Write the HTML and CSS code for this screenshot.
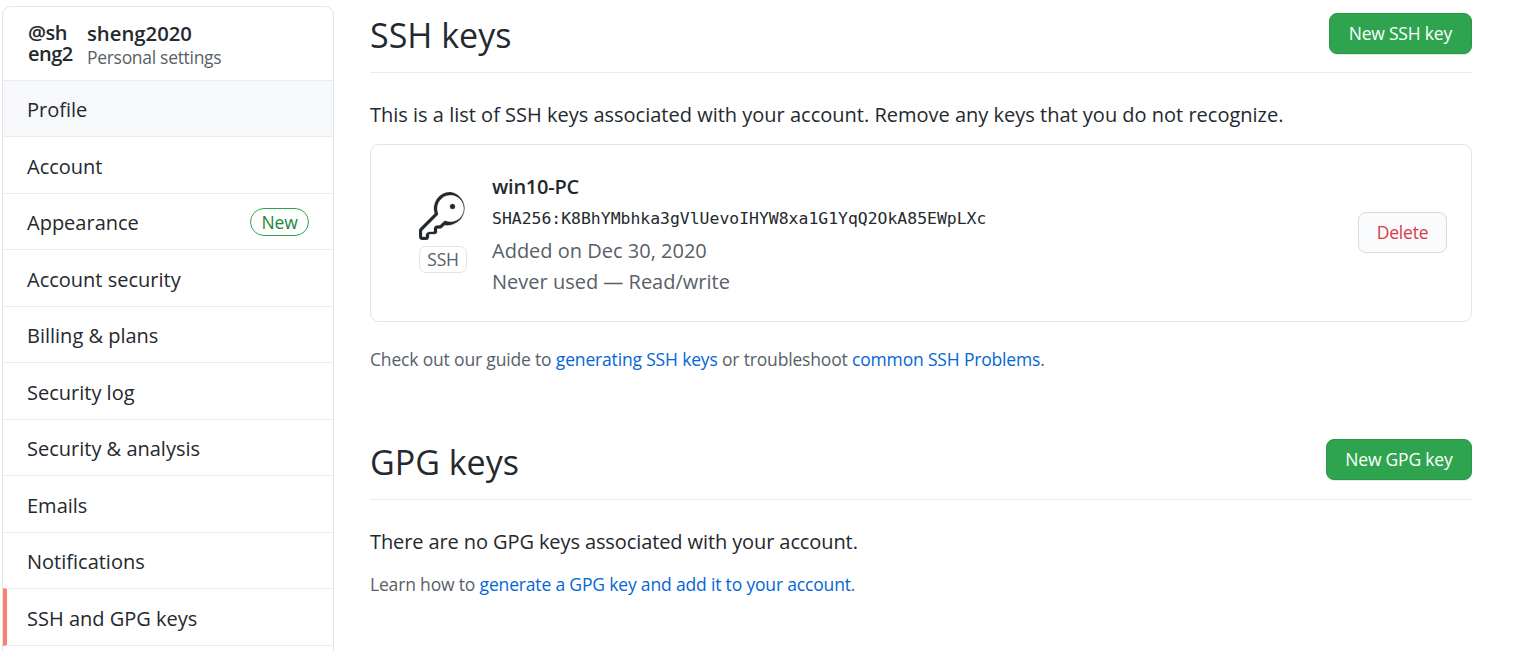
FILE: index.html
```html
<!DOCTYPE html>
<html lang="en">

<head>
    <meta charset="UTF-8">
    <title>SSH and GPG keys</title>
    <link rel="stylesheet" href="styles.css">
</head>

<body>
    <div class="page">
        <nav class="sidebar">
            <div class="account">
                <div class="avatar">@sheng2020</div>
                <div>
                    <div class="account-name">sheng2020</div>
                    <div class="account-note">Personal settings</div>
                </div>
            </div>
            <a class="menu-item first">Profile</a>
            <a class="menu-item">Account</a>
            <a class="menu-item">Appearance <span class="new-label">New</span></a>
            <a class="menu-item">Account security</a>
            <a class="menu-item">Billing &amp; plans</a>
            <a class="menu-item">Security log</a>
            <a class="menu-item">Security &amp; analysis</a>
            <a class="menu-item">Emails</a>
            <a class="menu-item">Notifications</a>
            <a class="menu-item selected">SSH and GPG keys</a>
        </nav>

        <main class="content">
            <div class="section-head">
                <h2>SSH keys</h2>
                <button class="btn-green">New SSH key</button>
            </div>
            <p class="intro">This is a list of SSH keys associated with your account. Remove any keys that you do not recognize.</p>

            <div class="key-box">
                <div class="key-icon">
                    <svg width="48" height="48" viewBox="0 0 24 24" fill="#24292e" stroke="#24292e" stroke-width="0.15">
                        <path d="M16.75 8.5a1.25 1.25 0 100-2.5 1.25 1.25 0 000 2.5z"></path>
                        <path fill-rule="evenodd" d="M15.75 0a8.25 8.25 0 00-7.851 10.79L.513 18.178A1.75 1.75 0 000 19.414v2.836C0 23.217.784 24 1.75 24h1.5A1.75 1.75 0 005 22.25v-1a.25.25 0 01.25-.25h2.735a.75.75 0 00.545-.22l.214-.213A.875.875 0 009 19.948V18.5a.25.25 0 01.25-.25h1.086c.464 0 .91-.184 1.237-.513l1.288-1.287A8.25 8.25 0 1015.75 0zM9 8.25a6.75 6.75 0 114.288 6.287.75.75 0 00-.804.168l-1.971 1.972a.25.25 0 01-.177.073H9.25A1.75 1.75 0 007.5 18.25v1.416l-.22.22a.25.25 0 01-.177.064H5.25A1.75 1.75 0 003.5 21.25v1a.25.25 0 01-.25.25h-1.5a.25.25 0 01-.25-.25v-2.836a.25.25 0 01.073-.177l7.722-7.721a.75.75 0 00.168-.804A6.73 6.73 0 019 8.25z"></path>
                    </svg>
                    <span class="key-type">SSH</span>
                </div>
                <div class="key-info">
                    <div class="key-title">win10-PC</div>
                    <code class="fingerprint">SHA256:K8BhYMbhka3gVlUevoIHYW8xa1G1YqQ2OkA85EWpLXc</code>
                    <div class="key-meta first-meta">Added on Dec 30, 2020</div>
                    <div class="key-meta">Never used — Read/write</div>
                </div>
                <button class="btn-delete">Delete</button>
            </div>

            <p class="note">Check out our guide to <a>generating SSH keys</a> or troubleshoot <a>common SSH Problems</a>.</p>

            <div class="section-head gpg">
                <h2>GPG keys</h2>
                <button class="btn-green">New GPG key</button>
            </div>
            <p class="intro gpg-intro">There are no GPG keys associated with your account.</p>
            <p class="note gpg-note">Learn how to <a>generate a GPG key and add it to your account</a>.</p>
        </main>
    </div>
</body>

</html>
```

FILE: styles.css
```css
body {
    margin: 0;
    height: 100vh;
    overflow: hidden;
    background-color: #fff;
    color: #24292e;
    font-family: "Open Sans", "Noto Sans", Arial, sans-serif;
    font-size: 20px;
}

.page {
    display: flex;
    height: 100%;
    padding: 6px 55px 0 2px;
    box-sizing: border-box;
}

.sidebar {
    width: 332px;
    flex-shrink: 0;
    box-sizing: border-box;
    border: 1px solid #e1e4e8;
    border-bottom: none;
    border-radius: 9px 9px 0 0;
}

.account {
    display: flex;
    align-items: center;
    gap: 13px;
    height: 72.6px;
    padding: 2px 0 0 25px;
    box-sizing: border-box;
}

.avatar {
    width: 46px;
    height: 44px;
    overflow: hidden;
    font-size: 20px;
    font-weight: 600;
    line-height: 21px;
    letter-spacing: -0.5px;
    word-break: break-all;
}

.account-name {
    font-size: 20.3px;
    font-weight: 600;
    line-height: 26px;
}

.account-note {
    font-size: 17.5px;
    line-height: 23px;
    color: #586069;
    letter-spacing: -0.3px;
}

.menu-item {
    display: flex;
    align-items: center;
    justify-content: space-between;
    box-sizing: border-box;
    height: 56.5px;
    padding: 3px 24px 0 24px;
    border-top: 1px solid #e9ebee;
}

.menu-item.first {
    background-color: #f6f8fa;
}

.menu-item.selected {
    height: 57.5px;
    padding-left: 20px;
    border-left: 4px solid #f9826c;
    border-bottom: 1px solid #e9ebee;
}

.new-label {
    margin-top: -2px;
    padding: 0 10.5px;
    border: 1px solid #2ea44f;
    border-radius: 14px;
    color: #22863a;
    font-size: 17.5px;
    line-height: 26px;
    letter-spacing: -0.2px;
}

.content {
    flex: 1;
    margin-left: 36px;
}

.section-head {
    display: flex;
    align-items: center;
    justify-content: space-between;
    box-sizing: border-box;
    height: 67px;
    padding-bottom: 11px;
    border-bottom: 1px solid #e9ebee;
}

.section-head h2 {
    margin-top: 3px;
}

.section-head.gpg {
    margin-top: 61px;
    padding-bottom: 13px;
}

.section-head.gpg h2 {
    margin-top: 5px;
}

.section-head.gpg .btn-green {
    padding: 0 18.5px 2px;
}

h2 {
    margin: 0;
    font-size: 34px;
    font-weight: 400;
    line-height: 44px;
}

.btn-green {
    height: 41px;
    padding: 0 19px 2px;
    border: 1px solid #2c974b;
    border-radius: 8px;
    background-color: #2ea44f;
    color: #fff;
    font-family: inherit;
    font-size: 17.5px;
    letter-spacing: -0.2px;
    box-shadow: 0 1px 0 rgba(27, 31, 35, 0.1);
}

.intro {
    margin: 28px 0 15px;
    line-height: 28px;
}

.key-box {
    display: flex;
    align-items: center;
    height: 178px;
    box-sizing: border-box;
    padding: 0 24px 0 48px;
    border: 1px solid #e1e4e8;
    border-radius: 9px;
}

.key-icon {
    display: flex;
    flex-direction: column;
    align-items: center;
    gap: 6px;
    width: 48px;
    margin: 0 25px 2px 0;
}

.key-icon svg {
    display: block;
}

.key-type {
    padding: 0 7px;
    border: 1px solid #e1e4e8;
    border-radius: 7px;
    color: #586069;
    font-size: 17.5px;
    line-height: 25px;
    letter-spacing: -0.2px;
}

.key-info {
    flex: 1;
    align-self: flex-start;
    padding-top: 28px;
}

.key-title {
    font-weight: 600;
    line-height: 28px;
    letter-spacing: -0.25px;
}

.fingerprint {
    display: block;
    font-family: "DejaVu Sans Mono", "Liberation Mono", monospace;
    font-size: 16.43px;
    line-height: 36px;
}

.key-meta {
    color: #586069;
    line-height: 31px;
}

.first-meta {
    margin-top: -2px;
}

.btn-delete {
    height: 41px;
    width: 89px;
    margin-bottom: 1px;
    padding-bottom: 2px;
    border: 1px solid #d8dadd;
    border-radius: 8px;
    background-color: #fafbfc;
    color: #d73a49;
    font-family: inherit;
    font-size: 17.5px;
    letter-spacing: -0.2px;
}

.note {
    margin: 24px 0 0;
    color: #586069;
    font-size: 17.5px;
    line-height: 26px;
    letter-spacing: -0.17px;
}

.note a {
    color: #0366d6;
}

.gpg-intro {
    margin-bottom: 15px;
    letter-spacing: -0.1px;
}

.gpg-note {
    margin-top: 0;
}
```
